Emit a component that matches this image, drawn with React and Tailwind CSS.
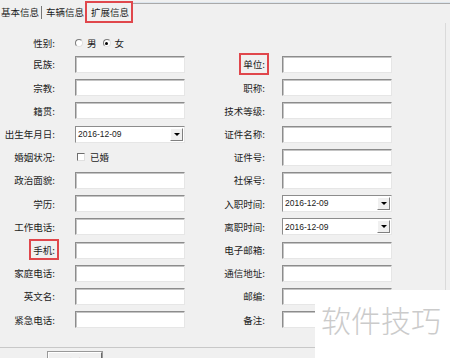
import React from 'react';

const FONT = { fontFamily: '"Noto Sans CJK SC", "Noto Sans", sans-serif' };

const LEFT = [
  { label: '性别', type: 'radio' },
  { label: '民族' },
  { label: '宗教' },
  { label: '籍贯' },
  { label: '出生年月日', type: 'date' },
  { label: '婚姻状况', type: 'check' },
  { label: '政治面貌' },
  { label: '学历' },
  { label: '工作电话' },
  { label: '手机', mark: true },
  { label: '家庭电话' },
  { label: '英文名' },
  { label: '紧急电话' },
];

const RIGHT = [
  null,
  { label: '单位', mark: true },
  { label: '职称' },
  { label: '技术等级' },
  { label: '证件名称' },
  { label: '证件号' },
  { label: '社保号' },
  { label: '入职时间', type: 'date' },
  { label: '离职时间', type: 'date' },
  { label: '电子邮箱' },
  { label: '通信地址' },
  { label: '邮编' },
  { label: '备注' },
];

function TextBox() {
  return (
    <div className="w-[110px] h-[17px] bg-white border border-t-[#8c8c8c] border-l-[#8c8c8c] border-r-[#e6e6e6] border-b-[#e6e6e6] shadow-[inset_1px_1px_0_#c4c4c4]" />
  );
}

function DateBox() {
  return (
    <div className="w-[110px] h-[17px] bg-white border border-t-[#8c8c8c] border-l-[#8c8c8c] border-r-[#e6e6e6] border-b-[#e6e6e6] flex items-center">
      <span className="flex-1 pl-[2px] text-[8.5px] text-[#222] leading-none" style={{ fontFamily: '"Liberation Sans", Arial, sans-serif' }}>
        2016-12-09
      </span>
      <div className="w-[13px] h-[13px] mr-[1px] bg-[#f0f0f0] border border-t-[#fff] border-l-[#fff] border-r-[#808080] border-b-[#808080] flex items-center justify-center">
        <div className="w-0 h-0 border-l-[3px] border-r-[3px] border-t-[3px] border-l-transparent border-r-transparent border-t-black" />
      </div>
    </div>
  );
}

function Radio({ on }) {
  return (
    <span className="w-[8px] h-[8px] rounded-full bg-white border border-t-[#7a7a7a] border-l-[#7a7a7a] border-r-[#e0e0e0] border-b-[#e0e0e0] flex items-center justify-center">
      {on && <span className="w-[3px] h-[3px] rounded-full bg-black" />}
    </span>
  );
}

function Label({ text, mark, width }) {
  return (
    <div className={`${width} flex justify-end whitespace-nowrap`}>
      <span className="relative">
        {text}:
        {mark && <span className="absolute -left-[4px] -right-[4px] -top-[4px] -bottom-[3px] border-2 border-[#e0474c]" />}
      </span>
    </div>
  );
}

function Field({ item }) {
  if (item.type === 'date') return <DateBox />;
  if (item.type === 'radio')
    return (
      <div className="flex items-center w-[110px]">
        <Radio />
        <span className="ml-[4px]">男</span>
        <span className="ml-[6px]"><Radio on /></span>
        <span className="ml-[4px]">女</span>
      </div>
    );
  if (item.type === 'check')
    return (
      <div className="flex items-center w-[110px]">
        <span className="ml-[2px] w-[8px] h-[8px] bg-white border border-t-[#6e6e6e] border-l-[#6e6e6e] border-r-[#e0e0e0] border-b-[#e0e0e0]" />
        <span className="ml-[5px]">已婚</span>
      </div>
    );
  return <TextBox />;
}

export default function App() {
  return (
    <div className="relative w-[450px] h-[358px] overflow-hidden bg-[#f0f0f0] text-[9.5px] text-[#1c1c1c]" style={FONT}>
      {/* tab strip */}
      <div className="flex items-start h-[23px] whitespace-nowrap">
        <div className="w-[41px] pl-[1px] pt-[6px] leading-[12px]">基本信息</div>
        <div className="mt-[6px] h-[13px] border-l border-[#777]" />
        <div className="w-[42px] pl-[4px] pt-[6px] leading-[12px]">车辆信息</div>
        <div className="ml-[1px] mt-[1px] w-[48px] h-[22px] border-2 border-[#e0474c] pl-[4px] pt-[3px] leading-[12px]">扩展信息</div>
        <div className="flex-1 mt-[2px] h-[2px] bg-[#dde6ee] border-b border-[#a9a9a9]" />
      </div>

      {/* form */}
      <div className="w-[446px] border-r border-[#dadada] pt-[10px]">
        {LEFT.map((l, i) => {
          const r = RIGHT[i];
          return (
            <div key={l.label} className={`flex items-center ${i === 0 ? 'h-[20px]' : 'h-[23.2px]'}`}>
              <Label text={l.label} mark={l.mark} width="w-[55px]" />
              <div className="ml-[20px]">
                <Field item={l} />
              </div>
              {r && (
                <>
                  <Label text={r.label} mark={r.mark} width="w-[80px]" />
                  <div className="ml-[17px]">
                    <Field item={r} />
                  </div>
                </>
              )}
            </div>
          );
        })}
        <div className="h-[16px]" />
      </div>

      {/* bottom bar */}
      <div className="border-t border-[#c8c8c8] pt-[4px]">
        <div className="ml-[48px] w-[54px] h-[22px] border border-t-[#fff] border-l-[#fff] border-r-[#6a6a6a] border-b-[#6a6a6a] outline outline-1 outline-[#999] flex justify-center pt-[2px]">
          确定
        </div>
      </div>

      {/* watermark */}
      <div className="absolute left-[315px] top-[290px] w-[135px] h-[68px] bg-white pl-[6px] pt-[14px]">
        <span className="text-[30px] leading-[30px] text-[#cbcbcb] font-light">软件技巧</span>
      </div>
    </div>
  );
}
